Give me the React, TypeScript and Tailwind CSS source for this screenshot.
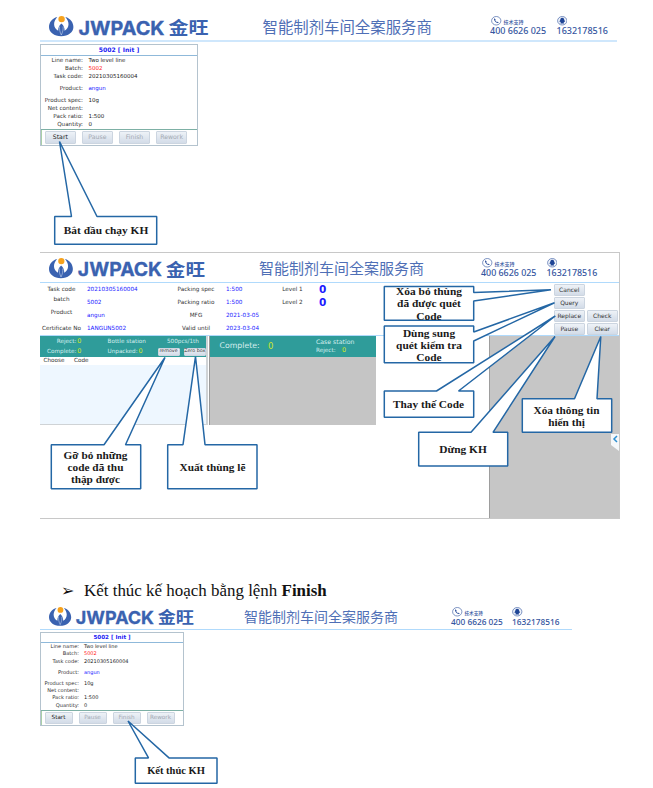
import React from "react";

type Size = "large" | "medium" | "small";

const headerStyles: Record<Size, { bar: string; logo: string; slogan: string; phone: string; qq: string; tiny: string }> = {
  large: {
    bar: "h-[34px] w-[577px] border-b-2 border-[#cfe7fc] pt-[8px]",
    logo: "ml-[9px] h-[21px] w-[160px]",
    slogan: "ml-[53.5px] w-[169.5px] text-[15.4px] leading-[21px]",
    phone: "ml-[58px] w-[66.5px] text-[9px]",
    qq: "text-[9px]",
    tiny: "text-[5px]",
  },
  medium: {
    bar: "h-[30px] w-[579px] border-b border-[#b0dafc] pt-[5px]",
    logo: "ml-[8.5px] h-[21px] w-[156.5px]",
    slogan: "ml-[54px] mt-[-1px] w-[165px] text-[15px] leading-[21px]",
    phone: "ml-[57px] w-[65.5px] text-[8.9px]",
    qq: "text-[8.9px]",
    tiny: "text-[5px]",
  },
  small: {
    bar: "h-[26px] w-[532px] border-b border-[#b0dafc] pt-[3px]",
    logo: "ml-[8.5px] h-[19.5px] w-[145.5px]",
    slogan: "ml-[50px] mt-[-1px] w-[154px] text-[14px] leading-[20px]",
    phone: "ml-[53px] w-[61px] text-[8.3px]",
    qq: "text-[8.3px]",
    tiny: "text-[4.6px]",
  },
};

function Logo({ className }: { className: string }) {
  return (
    <svg className={`overflow-visible ${className}`} viewBox="0 0 160 21" preserveAspectRatio="none">
      <path d="M8.300 1C3.200 2.300 0 6.300 0 11c0 5.200 5.200 9.300 12.200 9.300S24.400 16.200 24.400 11c0-4.700-3.200-8.700-8.100-10 2 2.200 3.200 4.600 3.200 7.300 0 2.800-1.500 5.100-3.900 6.500.1-2.900-.9-5.300-3.200-7.300-2.300 2-3.300 4.400-3.200 7.300C6.700 13.400 5.100 11.100 5.100 8.300c0-2.700 1.200-5.100 3.200-7.300Z" fill="#3a62b0" />
      <path d="M10.500 10.500c-.2 3 .4 5.600 1.800 8.500 1.500-2.900 2-5.500 1.800-8.500" fill="none" stroke="#dfe8f6" strokeWidth=".5" />
      <circle cx="12.600" cy="3.100" r="3.200" fill="#f6a21d" />
      <text x="29.500" y="18.500" textLength="86" lengthAdjust="spacingAndGlyphs" fontSize="19.200" strokeWidth=".3" className="fill-[#3a62b0] stroke-[#3a62b0] font-['Inter',sans-serif] font-bold">JWPACK</text>
      <text x="119.500" y="17.500" textLength="40" lengthAdjust="spacingAndGlyphs" fontSize="17" className="fill-[#3a62b0] font-['Noto_Sans_CJK_SC',sans-serif] font-bold">金旺</text>
    </svg>
  );
}

function PhoneIcon() {
  return (
    <svg className="h-[9.5px] w-[10.5px]" viewBox="0 0 21 19">
      <ellipse cx="10.500" cy="9.500" rx="9.300" ry="8.500" fill="none" stroke="#5471af" strokeWidth="1.500" />
      <path d="M6.500 4.500c-1.500 1.500 0 5 2.500 7.300s5.500 3 6.500 1.500l-2.200-2-1.600.8c-1.500-.8-2.600-2.100-3.200-3.400l1.100-1.300Z" fill="#2f519c" />
    </svg>
  );
}

function QQIcon() {
  return (
    <svg className="h-[9.5px] w-[10.5px]" viewBox="0 0 21 19">
      <ellipse cx="10.500" cy="9.500" rx="9.300" ry="8.500" fill="#eef2fa" stroke="#5471af" strokeWidth="1.500" />
      <path d="M10.500 3.500c-3 0-4 2.200-4 4.500-1.200 1.500-1.800 3.500-1 4.200l1.300-.6.8 1.800-1 1.600h7.800l-1-1.600.8-1.800 1.300.6c.8-.7.2-2.700-1-4.200 0-2.300-1-4.500-4-4.500Z" fill="#1f4596" />
    </svg>
  );
}

function BrandHeader({ size }: { size: Size }) {
  const s = headerStyles[size];
  return (
    <header className={`flex shrink-0 items-start whitespace-nowrap ${s.bar}`}>
      <Logo className={`shrink-0 ${s.logo}`} />
      <div className={`shrink-0 font-['Noto_Sans_CJK_SC',sans-serif] text-[#4f6fb6] ${s.slogan}`}>智能制剂车间全案服务商</div>
      <div className={`shrink-0 font-['Noto_Sans',sans-serif] font-medium leading-[9px] text-[#3556a0] ${s.phone}`}>
        <div className="flex items-center gap-[2px] pl-[1px]">
          <PhoneIcon />
          <span className={`mt-[2px] font-['Noto_Sans_CJK_SC',sans-serif] leading-[6px] ${s.tiny}`}>技术支持</span>
        </div>
        <div>400 6626 025</div>
      </div>
      <div className={`font-['Noto_Sans',sans-serif] font-medium leading-[9px] text-[#3556a0] ${s.qq}`}>
        <QQIcon />
        <div>1632178516</div>
      </div>
    </header>
  );
}

const buttonBase =
  "flex shrink-0 items-center justify-center rounded-[1px] border-[0.5px] border-[#ccd5e0] bg-linear-to-b from-[#eef2f7] to-[#d3dce8]";

function TaskCard({ small = false }: { small?: boolean }) {
  const row = small ? "h-[7.300px]" : "h-[8px]";
  const rows = [
    { label: "Line name:", value: "Two level line", color: "text-[#222]", h: row },
    { label: "Batch:", value: "5002", color: "text-[#ff1a1a]", h: row },
    { label: "Task code:", value: "20210305160004", color: "text-[#222]", h: row },
    { label: "Product:", value: "angun", color: "text-[#1a1aff]", h: small ? "h-[14.600px]" : "h-[16px]" },
    { label: "Product spec:", value: "10g", color: "text-[#222]", h: row },
    { label: "Net content:", value: "", color: "text-[#222]", h: row },
    { label: "Pack ratio:", value: "1:500", color: "text-[#222]", h: row },
    { label: "Quantity:", value: "0", color: "text-[#222]", h: small ? "h-[7.800px]" : "h-[8.500px]" },
  ];
  return (
    <div className={`flex flex-col border border-[#b4c3ce] bg-white ${small ? "h-[93.500px] w-[144px] text-[5px]" : "h-[102px] w-[158px] text-[5.500px]"}`}>
      <div className={`flex shrink-0 items-center justify-center border-b border-[#8fb9da] font-bold text-[#2222f5] ${small ? "h-[10px] text-[5.600px]" : "h-[11px] text-[6.100px]"}`}>
        5002 [ Init ]
      </div>
      <div className={`shrink-0 border-b border-[#7db0a5] ${small ? "h-[67.500px]" : "h-[74px] pt-[0.500px]"}`}>
        {rows.map((r) => (
          <div key={r.label} className={`flex items-center whitespace-nowrap ${r.h}`}>
            <span className={`flex shrink-0 justify-end text-[#333] ${small ? "w-[38px] text-[5.100px]" : "w-[42px] text-[5.650px]"}`}>{r.label}</span>
            <span className={`${small ? "pl-[5px]" : "pl-[5.500px]"} ${r.color}`}>{r.value}</span>
          </div>
        ))}
      </div>
      <div className={`flex grow items-center border-l border-[#a9cfa9] ${small ? "gap-[6px] pl-[2.500px] text-[5.700px]" : "gap-[6.500px] pl-[3px] text-[6.200px]"}`}>
        {["Start", "Pause", "Finish", "Rework"].map((b) => (
          <div key={b} className={`${buttonBase} ${small ? "h-[12px] w-[28px]" : "h-[13px] w-[30.600px]"} ${b === "Start" ? "text-[#222]" : "text-[#a3a9b3]"}`}>
            {b}
          </div>
        ))}
      </div>
    </div>
  );
}

function InfoGrid() {
  const label = "flex items-center justify-center text-[#333]";
  const value = "flex items-center pl-[4px] text-[#1a1aff]";
  return (
    <div className="flex h-[53px] shrink-0 border-b border-[#b0dafc] text-[5.700px]">
      <div className="grid grid-cols-[43px_91px_44px_52px_45px_60px] grid-rows-[13.100px_13.100px_13.100px_13.100px] whitespace-nowrap">
        <span className={label}>Task code</span>
        <span className={value}>20210305160004</span>
        <span className={label}>Packing spec</span>
        <span className={`${value} pl-[8px]`}>1:500</span>
        <span className={label}>Level 1</span>
        <span className={`${value} text-[10.500px] font-bold`}>0</span>
        <span className={`${label} pb-[6px]`}>batch</span>
        <span className={value}>5002</span>
        <span className={label}>Packing ratio</span>
        <span className={`${value} pl-[8px]`}>1:500</span>
        <span className={label}>Level 2</span>
        <span className={`${value} text-[10.500px] font-bold`}>0</span>
        <span className={`${label} pb-[6px]`}>Product</span>
        <span className={value}>angun</span>
        <span className={label}>MFG</span>
        <span className={`${value} pl-[8px]`}>2021-03-05</span>
        <span />
        <span />
        <span className={label}>Certificate No</span>
        <span className={value}>1ANGUN5002</span>
        <span className={label}>Valid until</span>
        <span className={`${value} pl-[8px]`}>2023-03-04</span>
      </div>
      <div className="ml-auto mr-[1.500px] grid grid-cols-[30.500px_30.500px] grid-rows-[11.500px_11.500px_11.500px_11.500px] gap-x-[2.500px] gap-y-[1.600px] pt-[1px] text-[6px] text-[#333]">
        {["Cancel", "", "Query", "", "Replace", "Check", "Pause", "Clear"].map((b, i) =>
          b ? <div key={i} className={buttonBase}>{b}</div> : <div key={i} />
        )}
      </div>
    </div>
  );
}

function Stations() {
  const yellow = "text-[#c9e62a]";
  return (
    <div className="flex h-[184px] text-[5.700px] text-[#d5eeee]">
      <div className="flex h-[89px] w-[168px] flex-col border-b border-r-2 border-[#cfd3d6] bg-[#eef7ff]">
        <div className="grid h-[20.500px] shrink-0 grid-cols-[41.500px_64px_1fr] grid-rows-[10px_10px] whitespace-nowrap bg-[#2f9c9a] pt-[0.500px]">
          <span className="flex items-center justify-end">Reject:<b className={`font-normal ${yellow} pl-[1px] text-[6.500px]`}>0</b></span>
          <span className="flex items-center pl-[26px]">Bottle station</span>
          <span className="flex items-center pl-[21.500px]">500pcs/1th</span>
          <span className="flex items-center justify-end">Complete:<b className={`font-normal ${yellow} pl-[1px] text-[6.500px]`}>0</b></span>
          <span className="flex items-center pl-[26px]">Unpacked:<b className={`font-normal ${yellow} pl-[1px] text-[6.500px]`}>0</b></span>
          <span className="flex items-center justify-between pl-[12px] text-[4.800px] text-[#333]">
            <span className={`${buttonBase} h-[8px] w-[22px]`}>remove</span>
            <span className={`${buttonBase} h-[8px] w-[22.500px]`}>Zero box</span>
          </span>
        </div>
        <div className="flex h-[8px] shrink-0 items-center bg-white text-[#333]">
          <span className="w-[34px] pl-[3.500px]">Choose</span>
          <span>Code</span>
        </div>
      </div>
      <div className="ml-[1px] flex h-[89px] w-[167px] flex-col border-l border-[#9a9a9a] bg-[#c5c5c5]">
        <div className="flex h-[20.500px] shrink-0 items-center whitespace-nowrap bg-[#2f9c9a]">
          <span className="w-[58px] pl-[9.500px] text-[7.800px]">Complete:</span>
          <span className={`w-[48px] text-[8.500px] ${yellow}`}>0</span>
          <div className="flex flex-col leading-[9.500px]">
            <span className="text-[6.200px]">Case station</span>
            <span>Reject:<b className={`pl-[6.500px] font-normal text-[6.500px] ${yellow}`}>0</b></span>
          </div>
        </div>
      </div>
      <div className="ml-auto flex w-[130.500px] items-start justify-end border-l border-[#9d9d9d] bg-[#c6c6c6] pt-[98px]">
        <svg className="h-[17px] w-[8px]" viewBox="0 0 8 17">
          <path d="M0 0h8v17L0 11Z" fill="#f6f8fa" />
          <path d="M6 2 3 5l3 3" fill="none" stroke="#2e8fd0" strokeWidth="1.500" />
        </svg>
      </div>
    </div>
  );
}

type Point = [number, number];
interface CalloutSpec {
  outline: Point[];
  box: string;
  lines: string[];
}

const callouts: CalloutSpec[] = [
  { outline: [[54.700, 216.500], [71.500, 216.500], [59.500, 141.500], [97, 216.500], [156.700, 216.500], [156.700, 244.200], [54.700, 244.200]], box: "left-[55px] top-[217px] w-[102px] h-[27px] text-[11.400px]", lines: ["Bắt đầu chạy KH"] },
  { outline: [[384.300, 286.500], [473.700, 286.500], [473.700, 292.500], [551, 289.700], [473.700, 301], [473.700, 320.300], [384.300, 320.300]], box: "left-[385px] top-[286px] w-[88px] h-[35px] text-[11.400px]", lines: ["Xóa bỏ thùng", "đã được quét", "Code"] },
  { outline: [[384.300, 326], [473.700, 326], [473.700, 332], [554.500, 302.700], [473.700, 341], [473.700, 362.700], [384.300, 362.700]], box: "left-[385px] top-[327px] w-[88px] h-[36px] text-[11.400px]", lines: ["Dùng sung", "quét kiểm tra", "Code"] },
  { outline: [[384.300, 391], [436.500, 391], [555.300, 316], [458.500, 391], [473.700, 391], [473.700, 417.300], [384.300, 417.300]], box: "left-[384px] top-[391px] w-[89px] h-[27px] text-[11.300px]", lines: ["Thay thế Code"] },
  { outline: [[418.700, 432.300], [471, 432.300], [555, 336.500], [493, 432.300], [507.700, 432.300], [507.700, 466], [418.700, 466]], box: "left-[419px] top-[433px] w-[88px] h-[33px] text-[11.400px]", lines: ["Dừng KH"] },
  { outline: [[522.300, 398.700], [574.500, 398.700], [600.800, 336.500], [597, 398.700], [611.700, 398.700], [611.700, 432.300], [522.300, 432.300]], box: "left-[522px] top-[400px] w-[89px] h-[32px] text-[11.300px]", lines: ["Xóa thông tin", "hiển thị"] },
  { outline: [[51.300, 444.700], [104, 444.700], [165, 357.500], [125.500, 444.700], [140.700, 444.700], [140.700, 488.700], [51.300, 488.700]], box: "left-[51px] top-[445px] w-[89px] h-[44px] text-[11.300px]", lines: ["Gỡ bỏ những", "code đã thu", "thập được"] },
  { outline: [[167.700, 444.700], [183, 444.700], [195.500, 356.500], [205, 444.700], [257, 444.700], [257, 488.700], [167.700, 488.700]], box: "left-[168px] top-[445px] w-[89px] h-[44px] text-[11.300px]", lines: ["Xuất thùng lẽ"] },
  { outline: [[135.300, 757.900], [148.500, 757.900], [128, 721], [169, 757.900], [217, 757.900], [217, 783.300], [135.300, 783.300]], box: "left-[135px] top-[759px] w-[82px] h-[25px] text-[10.500px]", lines: ["Kết thúc KH"] },
];

function Callouts() {
  return (
    <>
      <svg className="absolute left-0 top-0 h-[788px] w-[653px]" viewBox="0 0 653 788">
        {callouts.map((c) => (
          <polygon key={c.lines[0]} points={c.outline.map((p) => p.join(",")).join(" ")} fill="#fff" stroke="#2467a5" strokeWidth="1.500" strokeLinejoin="bevel" />
        ))}
      </svg>
      {callouts.map((c) => (
        <div key={c.lines[0]} className={`absolute flex flex-col items-center justify-center whitespace-nowrap font-['Liberation_Serif',serif] font-bold leading-[12.300px] text-[#1a1a1a] ${c.box}`}>
          {c.lines.map((l) => (
            <span key={l}>{l}</span>
          ))}
        </div>
      ))}
    </>
  );
}

export default function App() {
  return (
    <main className="relative flex h-[788px] w-[653px] flex-col overflow-hidden bg-white pl-[40px] pt-[8px] font-['DejaVu_Sans',sans-serif] leading-none">
      <section className="flex h-[244px] shrink-0 flex-col gap-[2px]">
        <BrandHeader size="large" />
        <TaskCard />
      </section>
      <section className="flex h-[267px] w-[580px] shrink-0 flex-col border-b border-r border-t border-[#c8c8c8]">
        <BrandHeader size="medium" />
        <InfoGrid />
        <Stations />
      </section>
      <section className="flex flex-col pt-[61px]">
        <h2 className="flex h-[22px] items-center whitespace-nowrap pl-[21px] font-['Liberation_Serif',serif] text-[16.950px] text-[#111]">
          <span className="w-[23px] font-['DejaVu_Sans',sans-serif] text-[16px]">➢</span>
          <span>Kết thúc kế hoạch bằng lệnh <b>Finish</b></span>
        </h2>
        <div className="mt-[2px] flex flex-col gap-[2px]">
          <BrandHeader size="small" />
          <TaskCard small />
        </div>
      </section>
      <Callouts />
    </main>
  );
}
